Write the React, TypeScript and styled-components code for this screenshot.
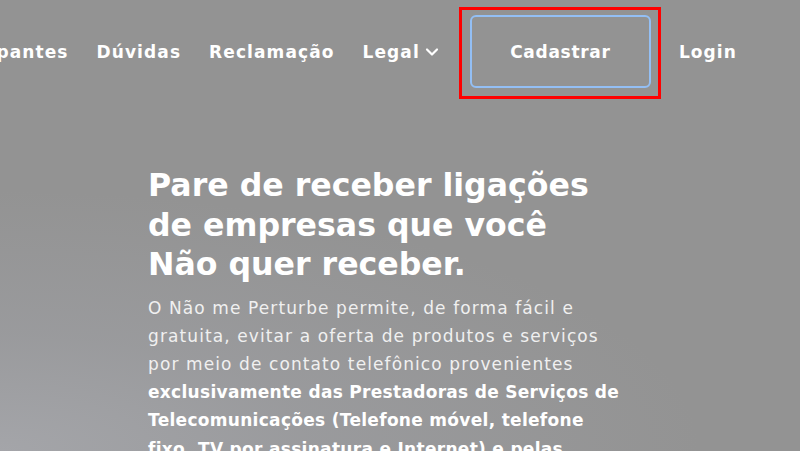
import React from "react";
import styled, { createGlobalStyle } from "styled-components";

const Global = createGlobalStyle`
  html, body { margin: 0; padding: 0; }
  body {
    width: 800px;
    height: 451px;
    overflow: hidden;
    font-family: "DejaVu Sans", "Liberation Sans", sans-serif;
    background: #939393;
  }
`;

const Page = styled.div`
  width: 800px;
  height: 451px;
  overflow: hidden;
  background:
    radial-gradient(ellipse 700px 260px at 0% 100%, rgba(164, 165, 169, 1) 0%, rgba(158, 159, 163, 0.6) 45%, rgba(147, 147, 147, 0) 100%),
    #939393;
  display: flex;
  flex-direction: column;
`;

const Nav = styled.nav`
  flex: 0 0 104px;
  display: flex;
  align-items: center;
  justify-content: flex-end;
  padding-right: 63px;
  gap: 28px;
  white-space: nowrap;
  overflow: hidden;
`;

const NavLink = styled.a`
  flex-shrink: 0;
  color: #ffffff;
  font-weight: 700;
  font-size: 17px;
  letter-spacing: 1.1px;
  text-decoration: none;
  display: flex;
  align-items: center;
  gap: 5px;
`;

const Focus = styled.div`
  flex-shrink: 0;
  border: 3px solid #ff0000;
  padding: 5px 7px 8px 8px;
  margin: 2px -10px 0 -8px;
`;

const SignUp = styled.a`
  width: 181px;
  height: 73px;
  box-sizing: border-box;
  border: 2px solid #93bff5;
  border-radius: 6px;
  display: flex;
  align-items: center;
  justify-content: center;
  color: #ffffff;
  font-weight: 700;
  font-size: 17px;
  letter-spacing: 0.7px;
  text-decoration: none;
`;

const Hero = styled.section`
  flex-shrink: 0;
  padding: 62px 0 0 148px;
  color: #ffffff;
`;

const Title = styled.h1`
  margin: 0;
  font-size: 31.6px;
  line-height: 39.5px;
  font-weight: 700;
  letter-spacing: 0;
  white-space: nowrap;
`;

const Text = styled.p`
  margin: 9px 0 0;
  font-size: 17px;
  line-height: 28.2px;
  letter-spacing: 1.1px;
  color: #f0f0f0;
  font-weight: 400;
  white-space: nowrap;

  strong { font-weight: 700; color: #ffffff; letter-spacing: 0.3px; }
`;

const Chevron = () => (
  <svg width="14" height="14" viewBox="0 0 14 14" fill="none">
    <path d="M2 4.5 L7 9.5 L12 4.5" stroke="#fff" strokeWidth="2.2" strokeLinecap="round" strokeLinejoin="round" />
  </svg>
);

export default function App() {
  return (
    <Page>
      <Global />
      <Nav>
        <NavLink href="#">Participantes</NavLink>
        <NavLink href="#">Dúvidas</NavLink>
        <NavLink href="#">Reclamação</NavLink>
        <NavLink href="#">Legal <Chevron /></NavLink>
        <Focus>
          <SignUp href="#">Cadastrar</SignUp>
        </Focus>
        <NavLink href="#">Login</NavLink>
      </Nav>
      <Hero>
        <Title>
          Pare de receber ligações
          <br />
          de empresas que você
          <br />
          Não quer receber.
        </Title>
        <Text>
          O Não me Perturbe permite, de forma fácil e
          <br />
          gratuita, evitar a oferta de produtos e serviços
          <br />
          por meio de contato telefônico provenientes
          <br />
          <strong>
            exclusivamente das Prestadoras de Serviços de
            <br />
            Telecomunicações (Telefone móvel, telefone
            <br />
            fixo, TV por assinatura e Internet) e pelas
          </strong>
        </Text>
      </Hero>
    </Page>
  );
}
